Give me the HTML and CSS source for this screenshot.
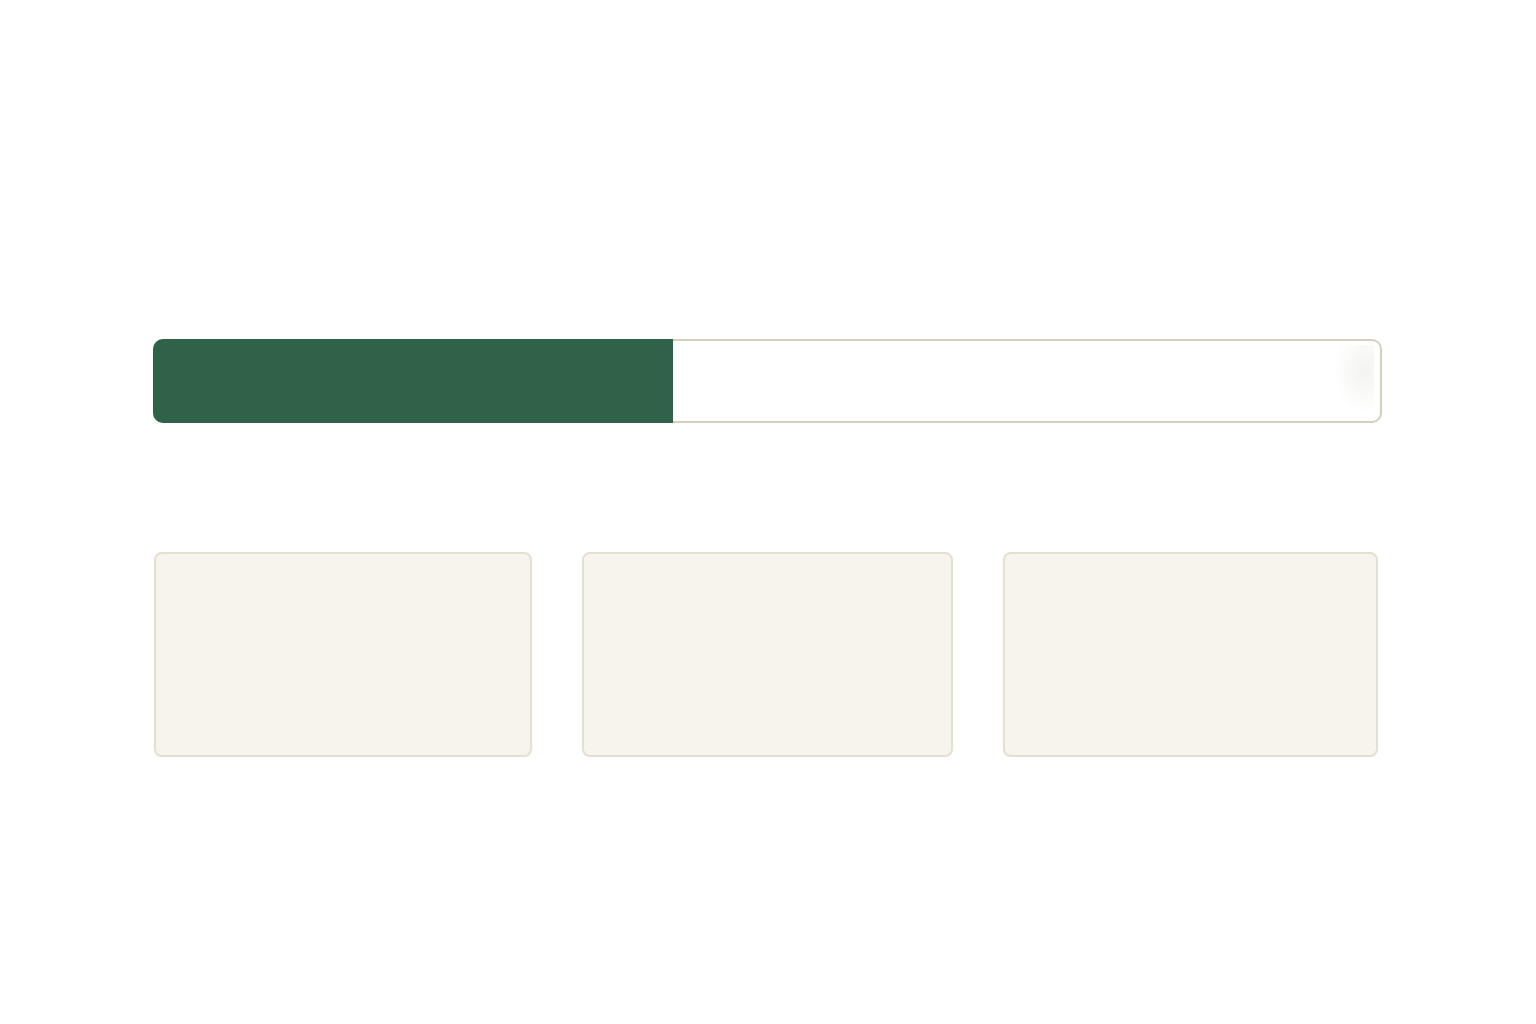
FILE: index.html
```html
<!DOCTYPE html>
<html lang="en">
<head>
  <meta charset="UTF-8" />
  <meta name="viewport" content="width=device-width, initial-scale=1.0" />
  <title>Progress</title>
  <link rel="stylesheet" href="styles.css">
</head>
<body>
  <main class="page">
    <div class="progress">
      <div class="progress-fill" style="width: 42.3%"></div>
    </div>

    <div class="cards">
      <div class="card"></div>
      <div class="card"></div>
      <div class="card"></div>
    </div>
  </main>
</body>
</html>
```

FILE: styles.css
```css
:root {
  --bg-color: #ffffff;
  --green: #2f6249;
  --track-border: #d3d0c0;
  --card-bg: #f7f4ee;
  --card-border: #e3dfd3;
}

* {
  margin: 0;
  padding: 0;
  box-sizing: border-box;
  font-family: 'Liberation Sans', Arial, sans-serif;
}

body {
  background-color: var(--bg-color);
}

.page {
  padding: 339px 154px 0 153px;
}

.progress {
  position: relative;
  display: flex;
  height: 84px;
  border-radius: 10px;
  background: #ffffff;
  box-shadow: inset 0 0 0 2px var(--track-border);
  overflow: hidden;
}

/* soft sheen near the right end of the track */
.progress::after {
  content: '';
  position: absolute;
  top: 6px;
  right: 8px;
  width: 44px;
  height: 72px;
  background: radial-gradient(ellipse at 80% 35%, rgba(236, 235, 230, 0.6), rgba(255, 255, 255, 0) 65%);
}

.progress-fill {
  background-color: var(--green);
}

.cards {
  display: grid;
  grid-template-columns: 378fr 372fr 375fr;
  gap: 50px;
  margin: 129px 4px 0 1px;
}

.card {
  height: 205px;
  background-color: var(--card-bg);
  border: 2px solid var(--card-border);
  border-radius: 8px;
  box-shadow: 0 1px 2px rgba(0, 0, 0, 0.04);
}
```
